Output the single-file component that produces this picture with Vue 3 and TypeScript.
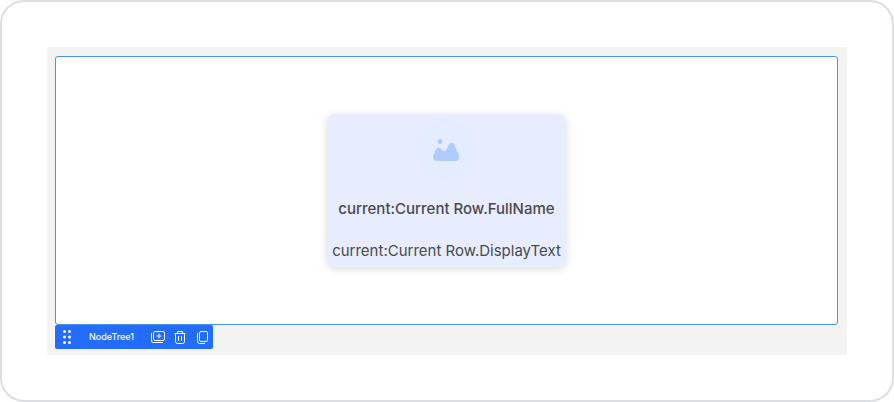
<script setup lang="ts">
import { ref } from 'vue'

interface NodeCard {
  title: string
  text: string
}

const widgetName = ref<string>('NodeTree1')
const node = ref<NodeCard>({
  title: 'current:Current Row.FullName',
  text: 'current:Current Row.DisplayText',
})
</script>

<template>
  <main class="frame">
    <section class="stage">
      <div class="canvas">
        <article class="card">
          <div class="avatar">
            <svg class="picture" viewBox="0 0 26 22" aria-hidden="true">
              <circle cx="7" cy="2.6" r="2.5" />
              <path d="M4.5 22C1 22-.8 19.500.4 16.500L2.600 11.300C3.800 8.100 6.200 7.500 8 9.800L9.700 11.600C10.600 12.500 12.200 12.300 12.900 11.200L16 5.700C17.400 3 20.300 3.100 21.600 6L25.700 16.200C26.700 19.200 25.200 22 22 22Z" />
            </svg>
          </div>
          <h1 class="title">{{ node.title }}</h1>
          <p class="text">{{ node.text }}</p>
        </article>
      </div>
      <div class="toolbar">
        <button class="tool grip" type="button" aria-label="Move">
          <svg width="8" height="14" viewBox="0 0 8 14" fill="currentColor">
            <circle cx="1.500" cy="1.500" r="1.500" /><circle cx="6.500" cy="1.500" r="1.500" />
            <circle cx="1.500" cy="7" r="1.500" /><circle cx="6.500" cy="7" r="1.500" />
            <circle cx="1.500" cy="12.500" r="1.500" /><circle cx="6.500" cy="12.500" r="1.500" />
          </svg>
        </button>
        <span class="name">{{ widgetName }}</span>
        <div class="actions">
          <button class="tool" type="button" aria-label="Add">
            <svg width="14" height="14" viewBox="0 0 14 14" fill="none" stroke="currentColor">
              <rect x="2.500" y="1.500" width="11" height="9" rx="1.500" />
              <path d="M.5 3V11Q.5 12.500 2 12.500H12M8 3.500V8.500M5.500 6H10.500" />
            </svg>
          </button>
          <button class="tool" type="button" aria-label="Delete">
            <svg width="14" height="14" viewBox="0 0 14 14" fill="none" stroke="currentColor">
              <path d="M1.500 3.500H12.500M4.500 3.500V1.500H9.500V3.500M2.500 3.500V11.500Q2.500 13.500 4.500 13.500H9.500Q11.500 13.500 11.500 11.500V3.500M5.500 6V11M8.500 6V11" />
            </svg>
          </button>
          <button class="tool" type="button" aria-label="Duplicate">
            <svg width="14" height="14" viewBox="0 0 14 14" fill="none" stroke="currentColor">
              <rect x="4.500" y="1.500" width="8" height="10" rx="1.500" />
              <path d="M2.500 3V11.500Q2.500 13.500 4.500 13.500H10" />
            </svg>
          </button>
        </div>
      </div>
    </section>
  </main>
</template>

<style>
body {
  background: #fff;
}
</style>

<style scoped>
.frame {
  box-sizing: border-box;
  padding: 45px;
  border: 2px solid #dbdee3;
  border-radius: 24px;
  background: #fff;
  font-family: Inter, "Liberation Sans", sans-serif;
}
.stage {
  padding: 9px 9px 6px 8px;
  background: #f3f3f3;
}
.canvas {
  display: flex;
  justify-content: center;
  padding: 57px 16px;
  border: 1px solid #4a93ec;
  border-radius: 3px;
  background: #fff;
}
.card {
  display: flex;
  flex-direction: column;
  align-items: center;
  gap: 18px;
  box-sizing: border-box;
  min-width: 238px;
  padding: 7px 5px 4px;
  border-radius: 8px;
  background: #e7ecff;
  box-shadow: 0 2px 8px rgba(0, 0, 0, 0.15);
  color: #4a4a4a;
}
.avatar {
  display: flex;
  align-items: center;
  justify-content: center;
  width: 58px;
  height: 58px;
  border-radius: 50%;
  background: #e3edff;
}
.picture {
  width: 26px;
  height: 22px;
  fill: #b0cbff;
}
.title,
.text {
  margin: 0;
  font-size: 15px;
  line-height: 24px;
  white-space: nowrap;
}
.title {
  font-weight: 500;
}
.text {
  font-weight: 400;
}
.toolbar {
  display: flex;
  align-items: center;
  box-sizing: border-box;
  width: fit-content;
  height: 24px;
  padding: 0 4px 0 8px;
  border-radius: 2px;
  background: #246bff;
  color: #fff;
}
.name {
  margin: 0 17px 0 18px;
  font-size: 9px;
  line-height: 12px;
  font-weight: 500;
}
.actions {
  display: flex;
  gap: 8px;
}
.tool {
  display: flex;
  padding: 0;
  border: 0;
  background: none;
  color: inherit;
  cursor: pointer;
}
.grip {
  cursor: grab;
}
</style>
